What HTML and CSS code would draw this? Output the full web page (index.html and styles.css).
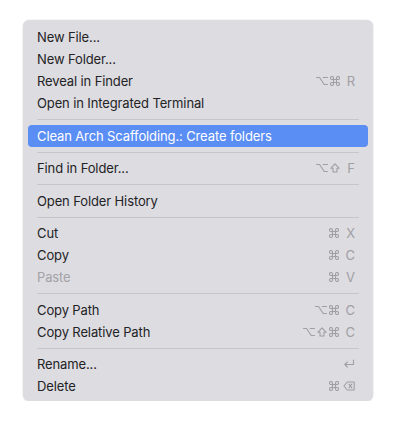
FILE: index.html
```html
<!DOCTYPE html>
<html lang="en">
	<head>
		<title>Explorer Context Menu</title>
		<meta charset="UTF-8">
		<meta content="width=device-width,initial-scale=1.0" name="viewport">
		<link rel="stylesheet" href="styles.css">
	</head>
	<body>
		<svg width="0" height="0" style="position:absolute">
			<defs>
				<symbol id="opt" viewBox="0 0 12 10"><path d="M0.5 1.5H3.6L8.2 8.5H11.5M7.2 1.5H11.5"/></symbol>
				<symbol id="cmd" viewBox="0 0 10 10"><path d="M3.5 3.5V2A1.5 1.5 0 1 0 2 3.5H8A1.5 1.5 0 1 0 6.5 2V8A1.5 1.5 0 1 0 8 6.5H2A1.5 1.5 0 1 0 3.5 8Z"/></symbol>
				<symbol id="shift" viewBox="0 0 10 10"><path d="M5 0.9L9.2 5.3H7V9H3V5.3H0.8Z"/></symbol>
				<symbol id="ret" viewBox="0 0 12 10"><path d="M10.5 1V5.5H1.8M4.4 2.9L1.8 5.5L4.4 8.1"/></symbol>
				<symbol id="del" viewBox="0 0 12 10"><path d="M4.2 1H11.2V9H4.2L0.9 5Z M6 3.2L8.8 6.8M8.8 3.2L6 6.8"/></symbol>
			</defs>
		</svg>
		<div id="menu">
			<div class="item"><span>New File...</span></div>
			<div class="item"><span>New Folder...</span></div>
			<div class="item"><span>Reveal in Finder</span><span class="keys"><svg class="k w12"><use href="#opt"/></svg><svg class="k"><use href="#cmd"/></svg><b>R</b></span></div>
			<div class="item"><span>Open in Integrated Terminal</span></div>
			<div class="sep"></div>
			<div class="item active"><span>Clean Arch Scaffolding.: Create folders</span></div>
			<div class="sep"></div>
			<div class="item"><span>Find in Folder...</span><span class="keys"><svg class="k w12"><use href="#opt"/></svg><svg class="k"><use href="#shift"/></svg><b>F</b></span></div>
			<div class="sep"></div>
			<div class="item"><span>Open Folder History</span></div>
			<div class="sep"></div>
			<div class="item"><span>Cut</span><span class="keys"><svg class="k"><use href="#cmd"/></svg><b>X</b></span></div>
			<div class="item"><span>Copy</span><span class="keys"><svg class="k"><use href="#cmd"/></svg><b>C</b></span></div>
			<div class="item disabled"><span>Paste</span><span class="keys"><svg class="k"><use href="#cmd"/></svg><b>V</b></span></div>
			<div class="sep"></div>
			<div class="item"><span>Copy Path</span><span class="keys"><svg class="k w12"><use href="#opt"/></svg><svg class="k"><use href="#cmd"/></svg><b>C</b></span></div>
			<div class="item"><span>Copy Relative Path</span><span class="keys"><svg class="k w12"><use href="#opt"/></svg><svg class="k"><use href="#shift"/></svg><svg class="k"><use href="#cmd"/></svg><b>C</b></span></div>
			<div class="sep"></div>
			<div class="item"><span>Rename...</span><span class="keys"><svg class="k w12"><use href="#ret"/></svg></span></div>
			<div class="item"><span>Delete</span><span class="keys"><svg class="k"><use href="#cmd"/></svg><svg class="k w12 gap"><use href="#del"/></svg></span></div>
		</div>
	</body>
</html>
```

FILE: styles.css
```css
body{margin:0;background:#fff;font-family:Inter,"Noto Sans",sans-serif;font-size:13px;letter-spacing:-0.12px;}
#menu{width:350px;height:381px;box-sizing:border-box;margin:20px 0 0 23px;padding:6px 0 4px;background:#dddce1;border-radius:6px;box-shadow:0 0 0 0.5px rgba(0,0,0,0.06),0 1px 3px rgba(0,0,0,0.06);}
.item{height:22px;margin:0 5px;padding:0 13px 0 9px;display:flex;align-items:center;justify-content:space-between;color:#232325;border-radius:4px;}
.item.active{background:#5a8ef5;color:#fff;}
.item.disabled{color:#a3a2a7;}
.keys{display:flex;align-items:center;gap:2px;color:#a09fa4;}
.k{width:10px;height:10px;fill:none;stroke:currentColor;stroke-width:1.1;stroke-linejoin:round;stroke-linecap:round;}
.k.w12{width:12px;}
.k.gap{margin-left:2px;}
.keys b{font-weight:normal;margin-left:5px;letter-spacing:0;}
.sep{height:1px;margin:5px 14px 4.5px;background:#c6c5ca;}
```
